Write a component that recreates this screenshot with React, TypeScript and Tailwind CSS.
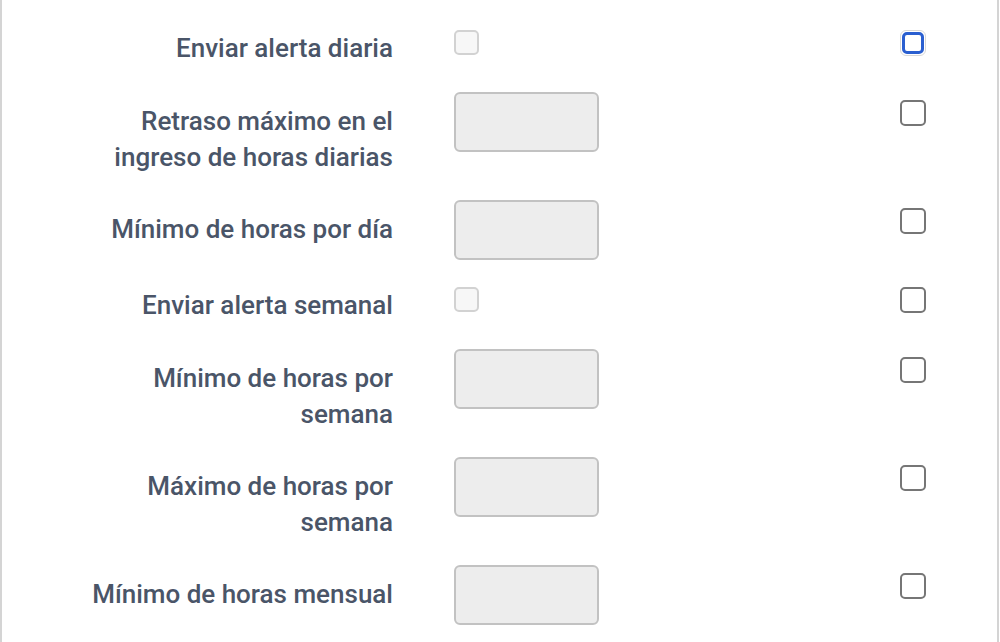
import React from "react";

type Row = { label: string[]; kind: "check" | "input" };

const rows: Row[] = [
  { label: ["Enviar alerta diaria"], kind: "check" },
  { label: ["Retraso máximo en el", "ingreso de horas diarias"], kind: "input" },
  { label: ["Mínimo de horas por día"], kind: "input" },
  { label: ["Enviar alerta semanal"], kind: "check" },
  { label: ["Mínimo de horas por", "semana"], kind: "input" },
  { label: ["Máximo de horas por", "semana"], kind: "input" },
  { label: ["Mínimo de horas mensual"], kind: "input" },
];

export default function App() {
  return (
    <div
      className="w-[1000px] h-[642px] bg-white overflow-hidden"
      style={{ fontFamily: "Roboto, 'Noto Sans', sans-serif" }}
    >
      <div className="w-[999px] h-full border-l-2 border-r-2 border-[#d4d4d4] pt-[29px] flex flex-col gap-[26px]">
        {rows.map((r, i) => {
          const h =
            r.kind === "check" ? "h-[37px]" : r.label.length > 1 ? "h-[82px]" : "h-[60px]";
          return (
            <div key={i} className={`flex items-start shrink-0 ${h}`}>
              <div
                className={`w-[391px] text-right text-[26px] leading-[36px] font-medium text-[#4a5568] ${
                  r.kind === "input" ? "pt-[11px]" : "pt-[1px]"
                }`}
              >
                {r.label.map((l, j) => (
                  <div key={j}>{l}</div>
                ))}
              </div>
              <div className="ml-[61px] w-[446px] shrink-0">
                {r.kind === "check" ? (
                  <div className="mt-[1px] w-[25px] h-[25px] rounded-[5px] border-2 border-[#d2d2d2] bg-[#f7f7f7]" />
                ) : (
                  <div className="w-[145px] h-[60px] rounded-[6px] border-2 border-[#c2c2c2] bg-[#ededed]" />
                )}
              </div>
              <div className={r.kind === "input" ? "mt-[8px]" : "mt-[1px]"}>
                {i === 0 ? (
                  <div className="w-[26px] h-[26px] rounded-[6px] border border-[#d8d8d8] flex items-center justify-center">
                    <div className="w-[22px] h-[22px] rounded-[5px] border-[3px] border-[#2a5fd0]" />
                  </div>
                ) : (
                  <div className="w-[26px] h-[26px] rounded-[5px] border-2 border-[#767676]" />
                )}
              </div>
            </div>
          );
        })}
      </div>
    </div>
  );
}
